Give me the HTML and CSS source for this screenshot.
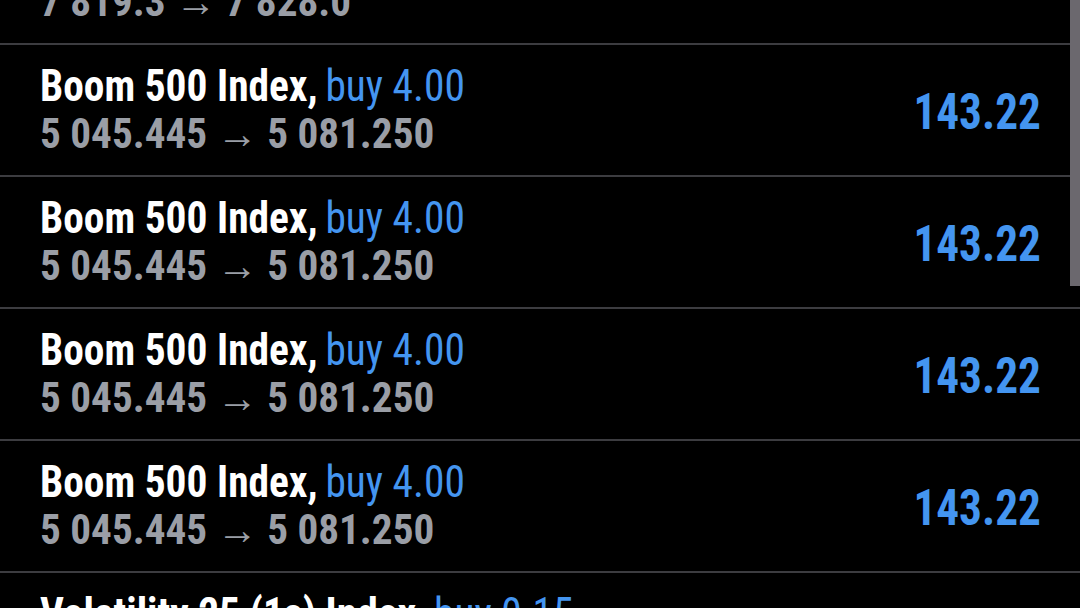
FILE: index.html
```html
<!DOCTYPE html>
<html>
<head>
<meta charset="utf-8">
<link rel="stylesheet" href="styles.css">
</head>
<body>
<div class="screen">
  <div class="list">
    <div class="row">
      <div class="info">
        <div class="title">Boom 1000 Index,<span class="gap"> </span><span class="side">sell 1.00</span></div>
        <div class="prices">7 819.3 → 7 828.0</div>
      </div>
      <div class="profit">-8.70</div>
    </div>
    <div class="row">
      <div class="info">
        <div class="title">Boom 500 Index,<span class="gap"> </span><span class="side">buy 4.00</span></div>
        <div class="prices">5 045.445 → 5 081.250</div>
      </div>
      <div class="profit">143.22</div>
    </div>
    <div class="row">
      <div class="info">
        <div class="title">Boom 500 Index,<span class="gap"> </span><span class="side">buy 4.00</span></div>
        <div class="prices">5 045.445 → 5 081.250</div>
      </div>
      <div class="profit">143.22</div>
    </div>
    <div class="row">
      <div class="info">
        <div class="title">Boom 500 Index,<span class="gap"> </span><span class="side">buy 4.00</span></div>
        <div class="prices">5 045.445 → 5 081.250</div>
      </div>
      <div class="profit">143.22</div>
    </div>
    <div class="row">
      <div class="info">
        <div class="title">Boom 500 Index,<span class="gap"> </span><span class="side">buy 4.00</span></div>
        <div class="prices">5 045.445 → 5 081.250</div>
      </div>
      <div class="profit">143.22</div>
    </div>
    <div class="row">
      <div class="info">
        <div class="title">Volatility 25 (1s) Index,<span class="gap"> </span><span class="side">buy 0.15</span></div>
        <div class="prices">1 052.31 → 1 053.02</div>
      </div>
      <div class="profit">10.65</div>
    </div>
  </div>
  <div class="scrollbar"></div>
</div>
</body>
</html>
```
FILE: styles.css
```css
html, body {
  margin: 0;
  padding: 0;
  background: #000;
}
.screen {
  position: relative;
  width: 1080px;
  height: 608px;
  overflow: hidden;
  background: #000;
  font-family: "Roboto Condensed", Roboto, "Liberation Sans", sans-serif;
  font-stretch: 75%;
}
.list {
  margin-top: -87px;
}
.row {
  display: flex;
  align-items: center;
  justify-content: space-between;
  height: 130px;
  padding: 0 39px 0 40px;
  border-bottom: 2px solid #3c3c40;
}
.info {
  display: flex;
  flex-direction: column;
}
.title {
  color: #fff;
  font-size: 45px;
  font-weight: 700;
  line-height: 48px;
  white-space: nowrap;
  transform: scaleX(0.92);
  transform-origin: left center;
}
.gap {
  word-spacing: -2px;
}
.side {
  color: #4495f0;
  font-weight: 400;
}
.prices {
  color: #9a9ea6;
  font-size: 42px;
  font-weight: 700;
  line-height: 48px;
  white-space: nowrap;
  transform: scaleX(0.98);
  transform-origin: left center;
}
.profit {
  color: #4495f0;
  font-size: 50px;
  font-weight: 700;
  margin-top: 3px;
  transform: scaleX(0.905);
  transform-origin: right center;
}
.scrollbar {
  position: absolute;
  top: 0;
  right: 0;
  width: 10px;
  height: 286px;
  background: #6b686e;
}
```
